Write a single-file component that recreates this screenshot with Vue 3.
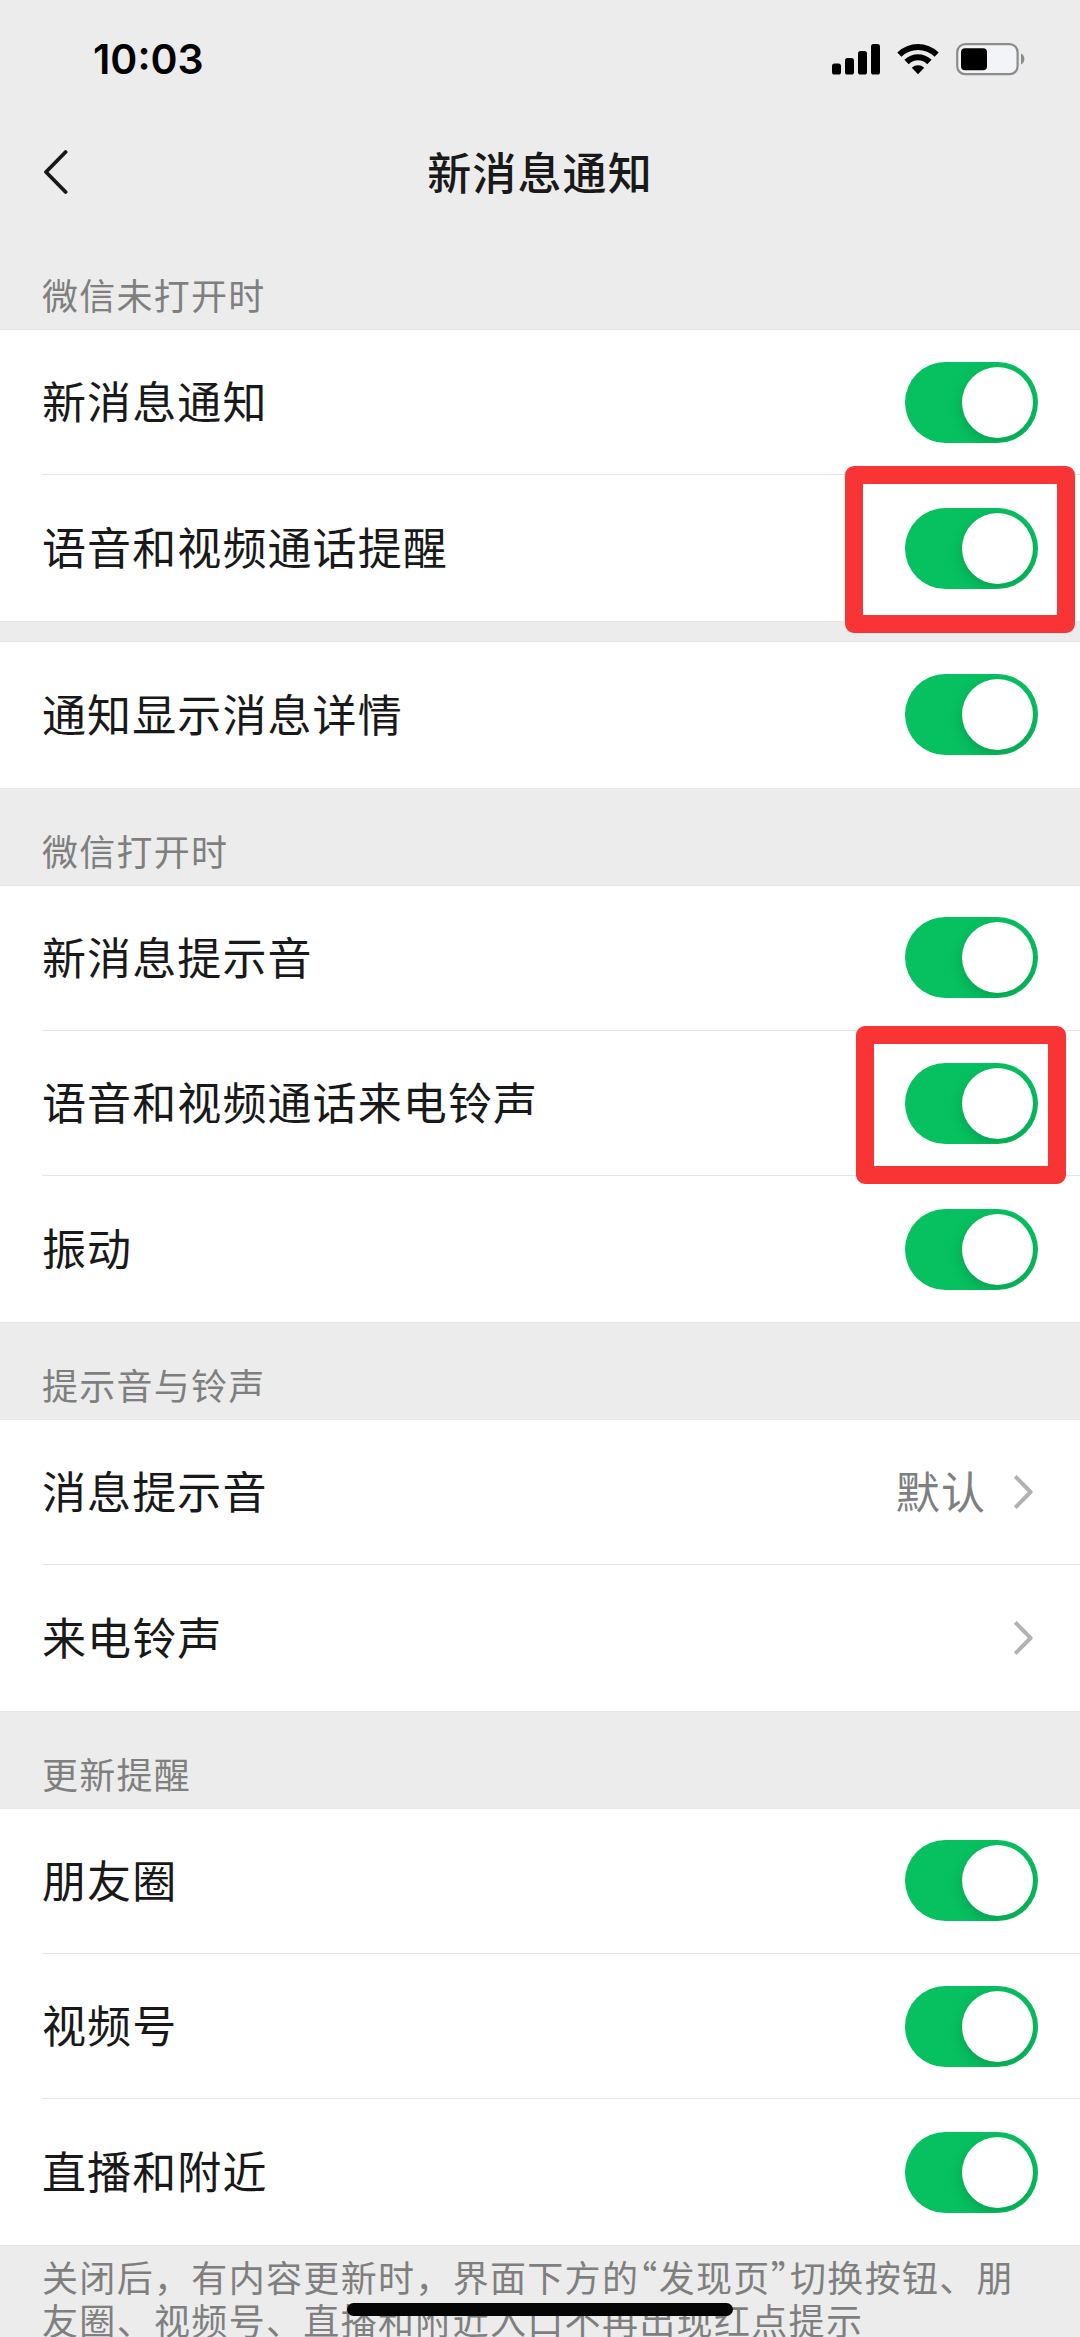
<template>
  <div class="page">
    <header class="status-bar">
      <span class="time">10:03</span>
      <div class="status-icons">
        <svg class="signal" width="48" height="32" viewBox="0 0 48 32">
          <rect x="0" y="20.5" width="9" height="11" rx="2.6" />
          <rect x="13" y="15" width="9" height="16.5" rx="2.6" />
          <rect x="26" y="8" width="9" height="23.5" rx="2.6" />
          <rect x="39" y="1" width="9" height="30.5" rx="2.6" />
        </svg>
        <svg class="wifi" width="42" height="32" viewBox="0 0 42 32">
          <path d="M0.3 9.4 A30 30 0 0 1 41.7 9.4 L37.6 13.7 A24 24 0 0 0 4.4 13.7 Z" />
          <path d="M7.4 16.8 A19.4 19.4 0 0 1 34.6 16.8 L30.3 21.2 A13.2 13.2 0 0 0 11.7 21.2 Z" />
          <path d="M14.8 24.7 A9.2 9.2 0 0 1 27.2 24.7 L21 31.2 Z" />
        </svg>
        <svg class="battery" width="69" height="34" viewBox="0 0 69 34">
          <rect x="1.2" y="2.2" width="60.4" height="30" rx="8" fill="#f3f4f7" stroke="#8c8c8c" stroke-width="2.2" />
          <rect x="5" y="6.2" width="26" height="22" rx="4" fill="#000" />
          <path d="M65 11.4 Q68.4 13.2 68.4 17 Q68.4 20.8 65 22.6 Z" fill="#8c8c8c" />
        </svg>
      </div>
    </header>

    <nav class="nav-bar">
      <svg class="back" width="26" height="46" viewBox="0 0 26 46">
        <path d="M23.6 3 L4 23 L23.6 43" />
      </svg>
      <h1 class="title">新消息通知</h1>
    </nav>

    <section v-for="(group, i) in groups" :key="i" class="group">
      <h2 v-if="group.title" class="group-title">{{ group.title }}</h2>
      <div v-else class="group-gap"></div>

      <div class="rows">
        <div v-for="row in group.rows" :key="row.label" class="row">
          <span class="label">{{ row.label }}</span>

          <button
            v-if="row.type === 'switch'"
            :class="['switch', { on: row.on }]"
            @click="row.on = !row.on"
          >
            <span class="knob"></span>
            <span v-if="row.mark" :class="['mark', row.mark]"></span>
          </button>

          <div v-else class="link">
            <span v-if="row.value" class="value">{{ row.value }}</span>
            <svg class="arrow" width="20" height="36" viewBox="0 0 20 36">
              <path d="M2.2 2.4 L17.6 18 L2.2 33.6" />
            </svg>
          </div>
        </div>
      </div>
    </section>

    <footer class="hint">
      <p>关闭后，有内容更新时，界面下方的<span class="quote">“</span>发现页<span class="quote">”</span>切换按钮、朋</p>
      <p>友圈、视频号、直播和附近入口不再出现红点提示</p>
    </footer>

    <div class="home-indicator"></div>
  </div>
</template>

<script setup>
import { ref } from 'vue'

const groups = ref([
  {
    title: '微信未打开时',
    rows: [
      { label: '新消息通知', type: 'switch', on: true },
      { label: '语音和视频通话提醒', type: 'switch', on: true, mark: 'large' }
    ]
  },
  {
    rows: [{ label: '通知显示消息详情', type: 'switch', on: true }]
  },
  {
    title: '微信打开时',
    rows: [
      { label: '新消息提示音', type: 'switch', on: true },
      { label: '语音和视频通话来电铃声', type: 'switch', on: true, mark: 'small' },
      { label: '振动', type: 'switch', on: true }
    ]
  },
  {
    title: '提示音与铃声',
    rows: [
      { label: '消息提示音', type: 'link', value: '默认' },
      { label: '来电铃声', type: 'link' }
    ]
  },
  {
    title: '更新提醒',
    rows: [
      { label: '朋友圈', type: 'switch', on: true },
      { label: '视频号', type: 'switch', on: true },
      { label: '直播和附近', type: 'switch', on: true }
    ]
  }
])
</script>

<style>
body {
  background: #ececec;
}
</style>

<style scoped>
.page {
  position: relative;
  width: 1080px;
  height: 2337px;
  overflow: hidden;
  background: #ececec;
  color: #191919;
  font-family: "Noto Sans CJK SC", sans-serif;
}

.status-bar {
  display: flex;
  align-items: center;
  justify-content: space-between;
  height: 118px;
  padding: 0 55px 0 93px;
}

.time {
  font-family: Inter, sans-serif;
  font-size: 41px;
  font-weight: 600;
  line-height: 1;
  color: #000;
}

.status-icons {
  display: flex;
  align-items: center;
}

.wifi {
  margin-left: 17px;
}

.battery {
  margin-left: 17px;
}

.nav-bar {
  position: relative;
  display: flex;
  align-items: center;
  justify-content: center;
  height: 110px;
}

.back {
  position: absolute;
  left: 42px;
  top: 31px;
}

.back path {
  fill: none;
  stroke: #191919;
  stroke-width: 3.8;
  stroke-linecap: round;
  stroke-linejoin: round;
}

.title {
  margin: 0;
  padding-bottom: 4px;
  font-size: 44px;
  font-weight: 500;
  line-height: 64px;
  letter-spacing: 1.1px;
}

.group-title {
  display: flex;
  align-items: flex-end;
  height: 98px;
  box-sizing: border-box;
  margin: 0;
  padding: 0 42px 10px;
  font-size: 36px;
  font-weight: 400;
  line-height: 52px;
  letter-spacing: 1.25px;
  color: #7f7f7f;
}

.nav-bar + .group .group-title {
  height: 102px;
}

.group-gap {
  height: 21.5px;
}

.rows {
  background: #fff;
  box-shadow: 0 1px #e7e7e7, 0 -1px #e8e8e8;
}

.row {
  display: flex;
  align-items: center;
  justify-content: space-between;
  height: 145.4px;
  box-sizing: border-box;
  margin-left: 42px;
  padding-right: 42px;
}

.row:not(:last-child) {
  border-bottom: 1px solid #e5e5e5;
}

.label,
.value {
  padding-bottom: 4px;
  font-size: 44px;
  line-height: 64px;
  letter-spacing: 1.1px;
}

.value {
  margin-right: 27px;
  color: #7f7f7f;
}

.link {
  display: flex;
  align-items: center;
  padding-right: 5px;
}

.arrow path {
  fill: none;
  stroke: #b2b2b2;
  stroke-width: 4;
  stroke-linejoin: round;
}

.switch {
  position: relative;
  display: flex;
  align-items: center;
  width: 133px;
  height: 81px;
  padding: 0 5px;
  border: none;
  border-radius: 41px;
  background: #dcdcdc;
  cursor: pointer;
}

.switch.on {
  justify-content: flex-end;
  background: #07c160;
}

.knob {
  width: 71px;
  height: 71px;
  border-radius: 50%;
  background: #fff;
}

.switch.on .knob {
  box-shadow: 0 5px 14px rgba(0, 0, 0, 0.17);
  clip-path: inset(-5px -5px -5px -40px round 40px);
}

/* red frames drawn over the call switches */
.mark {
  position: absolute;
  box-sizing: border-box;
  border: 18px solid #f83434;
  border-radius: 9px;
}

.mark.large {
  left: -60px;
  top: -42px;
  width: 230px;
  height: 167px;
}

.mark.small {
  left: -49px;
  top: -37px;
  width: 210px;
  height: 158px;
}

.hint {
  padding: 10px 42px 0;
  font-size: 36px;
  font-weight: 400;
  line-height: 43.5px;
  letter-spacing: 1.33px;
  color: #7f7f7f;
  white-space: nowrap;
}

.hint p {
  margin: 0;
}

.quote {
  font-feature-settings: "halt";
}

.home-indicator {
  position: absolute;
  left: 347px;
  top: 2303px;
  width: 386px;
  height: 13px;
  border-radius: 7px;
  background: #050505;
}
</style>
